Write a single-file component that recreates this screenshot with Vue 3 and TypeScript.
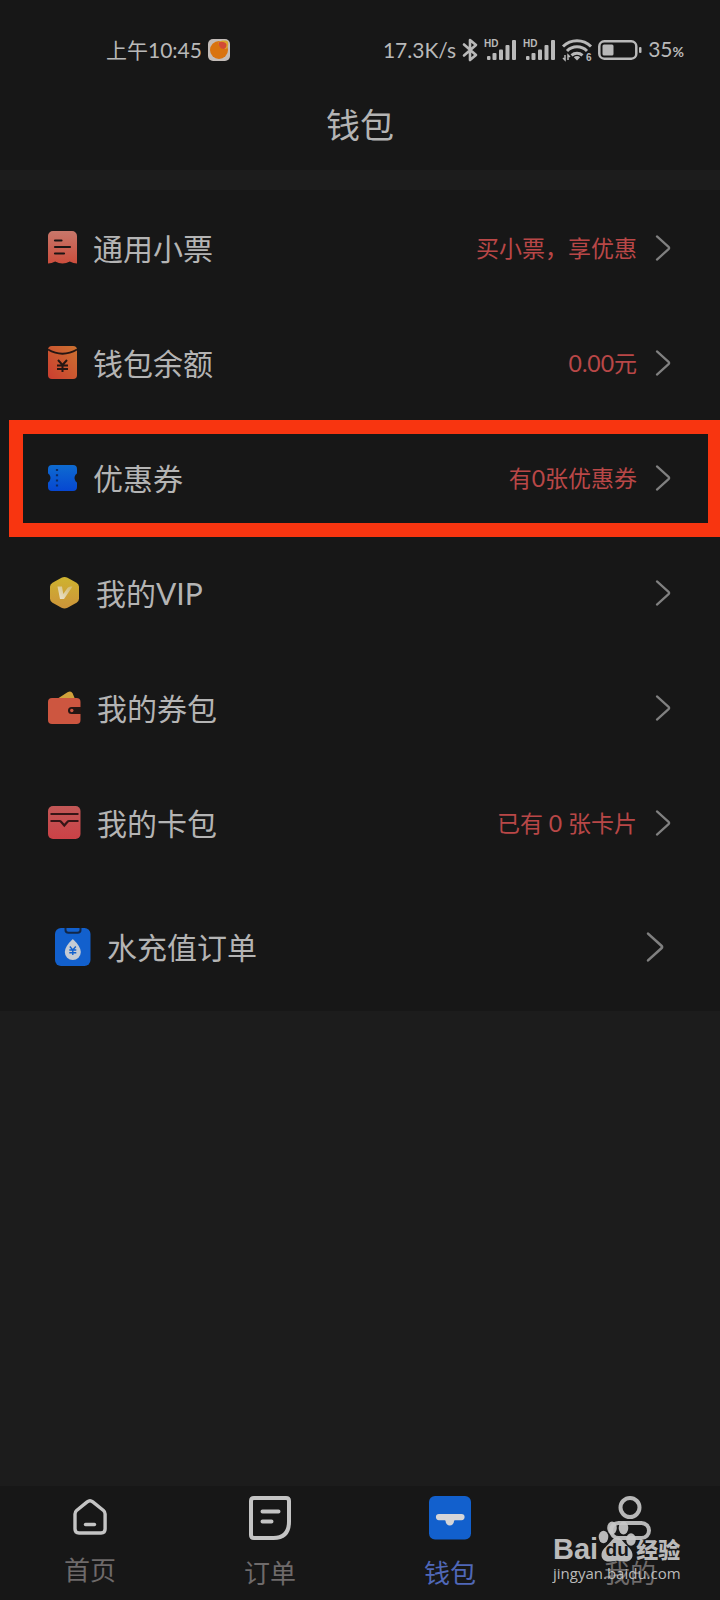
<script setup lang="ts">
import { ref } from 'vue'

type IconName = 'receipt' | 'balance' | 'coupon' | 'vip' | 'wallet' | 'cards' | 'water'

interface Row {
  icon: IconName
  label: string
  value?: string
  marked?: boolean
  large?: boolean
}

interface Tab {
  id: string
  label: string
}

const rows: Row[] = [
  { icon: 'receipt', label: '通用小票', value: '买小票，享优惠' },
  { icon: 'balance', label: '钱包余额', value: '0.00元' },
  { icon: 'coupon', label: '优惠券', value: '有0张优惠券', marked: true },
  { icon: 'vip', label: '我的VIP' },
  { icon: 'wallet', label: '我的券包' },
  { icon: 'cards', label: '我的卡包', value: '已有 0 张卡片' },
  { icon: 'water', label: '水充值订单', large: true },
]

const tabs: Tab[] = [
  { id: 'home', label: '首页' },
  { id: 'orders', label: '订单' },
  { id: 'wallet', label: '钱包' },
  { id: 'me', label: '我的' },
]

const active = ref('wallet')
</script>

<template>
  <div class="screen">
    <header class="header">
      <div class="status">
        <div class="status-left">
          <span>上午10:45</span>
          <svg class="app-badge" width="22" height="22" viewBox="0 0 22 22" aria-hidden="true">
            <rect width="22" height="22" rx="5" fill="#c3bcb8" />
            <circle cx="11" cy="11" r="9" fill="#d9730f" />
            <path d="M10 3.500C13 1 18.500 1 20 3c.8 3-.5 6-2 7-3 .5-7-2-8-6.500z" fill="#d9a52c" />
            <path d="M10.500 3.500c3-1.500 7-.5 8 2 .3 2.500-1.500 4.500-3 4.500-3 0-5-3-5-6.500z" fill="#d24a35" />
          </svg>
        </div>
        <div class="status-right">
          <span>17.3K/s</span>
          <svg width="16" height="24" viewBox="0 0 16 24" fill="none" stroke="#b9b9b9" stroke-width="2.600" stroke-linejoin="round" stroke-linecap="round" aria-hidden="true">
            <path d="M2 6.500 14 17 8 22V2l6 5L2 17.500" />
          </svg>
          <svg v-for="n in 2" :key="n" class="signal" width="33" height="22" viewBox="0 0 33 22" fill="#b9b9b9" aria-hidden="true">
            <text x="0" y="8" font-size="10" font-weight="700">HD</text>
            <rect x="3" y="17" width="3.500" height="4" rx="1" />
            <rect x="8.500" y="14" width="4" height="7" rx="1" />
            <rect x="15" y="10.500" width="4" height="10.500" rx="1" />
            <rect x="21.500" y="6" width="4" height="15" rx="1" />
            <rect x="28" y="1" width="4" height="20" rx="1" />
          </svg>
          <svg class="wifi" width="30" height="24" viewBox="0 0 30 24" aria-hidden="true">
            <g fill="none" stroke="#b9b9b9" stroke-width="3">
              <path d="M1 8.500a20 20 0 0 1 28 0" />
              <path d="M5 13a14 14 0 0 1 20 0" />
              <path d="M9.500 17.300a8.500 8.500 0 0 1 11 0" />
            </g>
            <path d="M15 22.500l-3.200-3.200a4.500 4.500 0 0 1 6.400 0z" fill="#b9b9b9" />
            <path d="M3 17v5l-2-2M6 22v-5l2 2" fill="none" stroke="#b9b9b9" stroke-width="1.500" />
            <text x="24" y="23" font-size="10" font-weight="700" fill="#b9b9b9">6</text>
          </svg>
          <svg class="battery" width="44" height="20" viewBox="0 0 44 20" aria-hidden="true">
            <rect x="1.300" y="1.300" width="37" height="17.400" rx="5" fill="none" stroke="#b9b9b9" stroke-width="2.500" />
            <rect x="4.500" y="4.500" width="11" height="11" rx="1.500" fill="#b9b9b9" />
            <rect x="41" y="7" width="2.500" height="6" rx="1" fill="#b9b9b9" />
          </svg>
          <span>35<small>%</small></span>
        </div>
      </div>
      <h1 class="title">钱包</h1>
    </header>

    <main class="list">
      <button v-for="row in rows" :key="row.label" type="button" class="row" :class="{ large: row.large, marked: row.marked }">
        <svg v-if="row.icon === 'receipt'" width="29" height="33" viewBox="0 0 29 33" aria-hidden="true">
          <defs>
            <linearGradient id="receipt-fill" x1="0" y1="0" x2="0" y2="1">
              <stop offset="0" stop-color="#c8776a" /><stop offset="1" stop-color="#cc4e3d" />
            </linearGradient>
          </defs>
          <path d="M5 0h19a5 5 0 0 1 5 5v27.500q-3.500 0-7.200-2-3.600 2-7.300 2t-7.300-2Q3.600 32.500 0 32.500V5a5 5 0 0 1 5-5z" fill="url(#receipt-fill)" />
          <path d="M7 9.500h6.500M7 16h15M7 22.500h9" stroke="#1c1514" stroke-width="2.200" stroke-linecap="round" />
        </svg>
        <svg v-else-if="row.icon === 'balance'" width="29" height="33" viewBox="0 0 29 33" aria-hidden="true">
          <defs>
            <linearGradient id="balance-fill" x1="1" y1="0" x2="0" y2="1">
              <stop offset="0" stop-color="#cb7230" /><stop offset="1" stop-color="#cb3d30" />
            </linearGradient>
          </defs>
          <rect width="29" height="33" rx="4" fill="url(#balance-fill)" />
          <path d="M0 3.500q14.500 8.500 29 0" fill="none" stroke="#251613" stroke-width="1.800" />
          <path d="M10 14l4.500 5 4.500-5M9 19.500h11M9 23h11M14.500 19v7" fill="none" stroke="#251613" stroke-width="2" />
        </svg>
        <svg v-else-if="row.icon === 'coupon'" width="29" height="26" viewBox="0 0 29 26" aria-hidden="true">
          <defs>
            <linearGradient id="coupon-fill" x1="0" y1="0" x2="0" y2="1">
              <stop offset="0" stop-color="#0e6bd0" /><stop offset="1" stop-color="#0647d2" />
            </linearGradient>
          </defs>
          <path d="M4 0h21a4 4 0 0 1 4 4v4q-.2 1.200-1.300 1.600-2.400 3.400 0 6.800Q28.800 16.800 29 18v4a4 4 0 0 1-4 4H4a4 4 0 0 1-4-4v-4q.2-1.200 1.300-1.600 2.400-3.400 0-6.800Q.2 9.200 0 8V4a4 4 0 0 1 4-4z" fill="url(#coupon-fill)" />
          <path d="M9 4v2M9 9.200v2M9 14.400v2M9 19.600v2" stroke="#0c2c66" stroke-width="2.200" />
        </svg>
        <svg v-else-if="row.icon === 'vip'" width="32" height="32" viewBox="0 0 32 32" aria-hidden="true">
          <defs>
            <linearGradient id="vip-fill" x1="0" y1="0" x2="0" y2="1">
              <stop offset="0" stop-color="#ceb32f" /><stop offset="1" stop-color="#cd943a" />
            </linearGradient>
            <linearGradient id="vip-mark" x1="1" y1="0" x2="0" y2="1">
              <stop offset="0" stop-color="#d2b96c" /><stop offset="1" stop-color="#ebe5d3" />
            </linearGradient>
          </defs>
          <path d="M13.500.8q3-1.500 6 0l9 5q2.500 1.500 2.500 4v12q0 2.500-2.500 4l-9 5q-3 1.500-6 0l-9-5Q2 24.300 2 21.800v-12q0-2.500 2.500-4z" fill="url(#vip-fill)" />
          <path d="M9.500 9.500h4.500l1.300 7.500 4.200-6q1.200-1.500 3-1.500h2l-8.500 12.500h-4z" fill="url(#vip-mark)" />
        </svg>
        <svg v-else-if="row.icon === 'wallet'" width="33" height="33" viewBox="0 0 33 33" aria-hidden="true">
          <path d="M9 8 19.500 1.300q3.500-2.200 5.200 1.200L27 8z" fill="#d1a13b" />
          <path d="M4 7h24.500a4 4 0 0 1 4 4v18a4 4 0 0 1-4 4H4a4 4 0 0 1-4-4V11a4 4 0 0 1 4-4z" fill="#cd5640" />
          <path d="M33 16h-9.500a3.500 3.500 0 0 0 0 7H33z" fill="#251613" />
          <path d="M33 18.300h-4v2.200h4z" fill="#251613" />
          <circle cx="23.800" cy="19.500" r="1.700" fill="#cd5640" />
        </svg>
        <svg v-else-if="row.icon === 'cards'" width="33" height="33" viewBox="0 0 33 33" aria-hidden="true">
          <defs>
            <linearGradient id="cards-fill" x1="0" y1="0" x2="0" y2="1">
              <stop offset="0" stop-color="#c25857" /><stop offset="1" stop-color="#cb4146" />
            </linearGradient>
          </defs>
          <rect width="32.500" height="33" rx="5" fill="url(#cards-fill)" />
          <path d="M2.500 8h28M2.500 15h9q1 0 1.800 1l3 3.500 3-3.500q.8-1 1.800-1h9.400" fill="none" stroke="#351516" stroke-width="2.200" />
        </svg>
        <svg v-else width="36" height="38" viewBox="0 0 36 38" aria-hidden="true">
          <rect width="35.500" height="38" rx="6" fill="#1260cd" />
          <path d="M10.500 0v2q0 2.800 3 2.800h9q3 0 3-2.800V0" fill="#1260cd" stroke="#122748" stroke-width="2" />
          <path d="M17.800 11q8 7.500 8 13a8 8 0 0 1-16 0q0-5.500 8-13z" fill="#c5cbd4" />
          <path d="M14.800 18.500l3 3.500 3-3.500M14.300 22h7M14.300 24.700h7M17.800 22v5" fill="none" stroke="#1260cd" stroke-width="1.400" />
        </svg>

        <span class="label">{{ row.label }}</span>
        <span class="value">{{ row.value }}</span>
        <svg class="chevron" viewBox="0 0 16 28" fill="none" stroke="#808080" stroke-width="2.400" stroke-linecap="round" stroke-linejoin="round" aria-hidden="true">
          <path d="M1.500 1.500 14 12.800q1.300 1.200 0 2.400L1.500 26.500" />
        </svg>
      </button>
    </main>

    <nav class="tabs">
      <button v-for="tab in tabs" :key="tab.id" type="button" class="tab" :class="[tab.id, { active: active === tab.id }]" @click="active = tab.id">
        <svg v-if="tab.id === 'home'" width="34" height="36" viewBox="0 0 34 36" fill="none" stroke="#c4c4c4" stroke-width="3.400" stroke-linecap="round" stroke-linejoin="round" aria-hidden="true">
          <path d="M14.200 2.900q2.800-2.200 5.600 0L30.500 11.500q1.600 1.400 1.600 3.500v15q0 4-4 4H6q-4 0-4-4V15q0-2.100 1.600-3.500z" />
          <path d="M12.500 25.500h9" />
        </svg>
        <svg v-else-if="tab.id === 'orders'" width="42" height="44" viewBox="0 0 42 44" fill="none" stroke="#c4c4c4" stroke-width="4" stroke-linecap="round" aria-hidden="true">
          <path d="M5 2h32q3 0 3 3v20.500Q40 42 24.500 42H5q-3 0-3-3V5q0-3 3-3z" />
          <path d="M13.500 15.500h16M13.500 25.500h9" />
        </svg>
        <svg v-else-if="tab.id === 'wallet'" width="42" height="44" viewBox="0 0 42 44" aria-hidden="true">
          <rect width="42" height="43.500" rx="6" fill="#1260cd" />
          <path d="M10 18h22.500a3 3 0 0 1 0 6.200H26q-1 0-1 1a4.200 4.200 0 0 1-8.400 0q0-1-1-1H10a3 3 0 0 1 0-6.200z" fill="#d5d5d8" />
        </svg>
        <svg v-else width="42" height="44" viewBox="0 0 42 44" fill="none" stroke="#b8b8b8" stroke-width="4" aria-hidden="true">
          <circle cx="21" cy="11.500" r="9.500" />
          <rect x="2" y="27" width="38" height="15" rx="7.500" />
        </svg>
        <span>{{ tab.label }}</span>
      </button>
    </nav>

    <div class="watermark">
      <div class="brand">
        <span class="bai">Bai</span>
        <span class="paw">
          <svg width="38" height="42" viewBox="0 0 38 42" fill="#c8c8c8" aria-hidden="true">
            <ellipse cx="5.500" cy="17" rx="4.800" ry="6.200" />
            <ellipse cx="14" cy="8" rx="4.800" ry="6.500" />
            <ellipse cx="25.500" cy="8" rx="4.800" ry="6.500" />
            <ellipse cx="33" cy="19.500" rx="4.800" ry="6.200" />
            <path d="M19 17.500c3.500 0 5 2.500 7.500 5.500 3 3.500 8 6.500 8 12 0 4-3 6.500-7 6.500-3 0-5-.8-8.500-.8s-5.500.8-8.500.8c-4 0-7-2.500-7-6.500 0-5.500 5-8.500 8-12 2.500-3 4-5.500 7.500-5.500z" />
          </svg>
          <span class="du">du</span>
        </span>
        <span class="jingyan">经验</span>
      </div>
      <div class="site">jingyan.baidu.com</div>
    </div>
  </div>
</template>

<style>
body {
  margin: 0;
  background: #1c1c1c;
}
</style>

<style scoped>
.screen {
  position: relative;
  display: flex;
  flex-direction: column;
  min-height: 100vh;
  background: #1c1c1c;
  color: #b4b4b4;
  font-family: Lato, "Noto Sans CJK SC", sans-serif;
}

svg {
  display: block;
  flex: none;
  overflow: visible;
}

svg text {
  font-family: "Liberation Sans", sans-serif;
}

button {
  margin: 0;
  padding: 0;
  border: 0;
  background: none;
  color: inherit;
  font: inherit;
  cursor: pointer;
}

.header {
  padding-bottom: 4px;
  background: #171717;
}

.status {
  display: flex;
  align-items: center;
  justify-content: space-between;
  height: 60px;
  padding: 20px 36px 0 106px;
  font-size: 21px;
  line-height: 24px;
  color: #b9b9b9;
}

.status-left,
.status-right {
  display: flex;
  align-items: center;
  gap: 6px;
}

.status-right small {
  font-size: 14px;
  font-weight: 700;
}

.title {
  display: flex;
  align-items: center;
  justify-content: center;
  height: 86px;
  margin: 0;
  font-size: 34px;
  font-weight: 400;
}

.list {
  margin-top: 20px;
  background: #171717;
}

.row {
  position: relative;
  display: flex;
  align-items: center;
  width: 100%;
  height: 115px;
  padding: 0 49px 0 48px;
  text-align: left;
}

.row.large {
  height: 131px;
  padding: 3px 56px 0 55px;
}

.label {
  margin-left: 16px;
  font-size: 30px;
  line-height: 40px;
}

.value {
  flex: 1;
  margin-right: 18px;
  color: #b94747;
  font-size: 23px;
  line-height: 32px;
  text-align: right;
}

.chevron {
  width: 16px;
  height: 26px;
}

.large .chevron {
  width: 18px;
  height: 30px;
}

.marked::after {
  content: "";
  position: absolute;
  inset: 0 0 -2px 9px;
  border: 14px solid #f83510;
  border-right-width: 12px;
  pointer-events: none;
}

.tabs {
  display: grid;
  grid-template-columns: repeat(4, 1fr);
  height: 114px;
  margin-top: auto;
  background: #171717;
}

.tab {
  display: flex;
  flex-direction: column;
  align-items: center;
  justify-content: flex-start;
  gap: 16px;
  padding-top: 10px;
  color: #6e6a6a;
  font-size: 26px;
  line-height: 34px;
}

.tab.home {
  padding-top: 13px;
  gap: 18px;
}

.tab.active {
  color: #5068b8;
}

.watermark {
  position: absolute;
  right: 37px;
  bottom: 16px;
  width: 130px;
  color: #c8c8c8;
  opacity: 0.92;
}

.brand {
  display: flex;
  align-items: flex-end;
  height: 42px;
}

.bai {
  font-family: "Liberation Sans", sans-serif;
  font-size: 29px;
  font-weight: 700;
  line-height: 26px;
}

.paw {
  position: relative;
}

.du {
  position: absolute;
  right: 0;
  bottom: 2px;
  left: 0;
  color: #171717;
  font-family: "Liberation Sans", sans-serif;
  font-size: 19px;
  font-weight: 700;
  line-height: 20px;
  text-align: center;
}

.jingyan {
  font-size: 22px;
  font-weight: 900;
  line-height: 24px;
}

.site {
  font-family: "Open Sans", sans-serif;
  font-size: 15px;
  font-weight: 500;
  line-height: 22px;
}
</style>
